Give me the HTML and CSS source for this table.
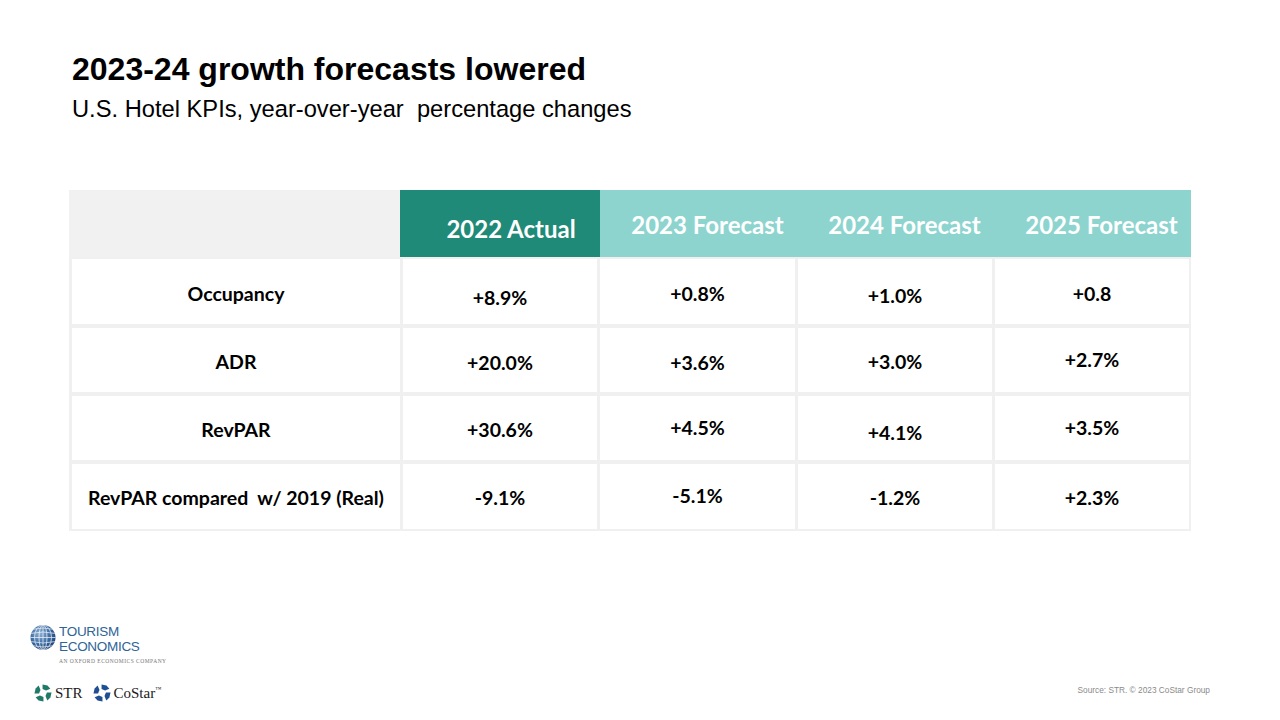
FILE: index.html
```html
<!DOCTYPE html>
<html>
<head>
<meta charset="utf-8">
<link rel="stylesheet" href="styles.css">
</head>
<body>
<div class="slide">
  <header class="heading">
    <h1 class="title">2023-24 growth forecasts lowered</h1>
    <p class="subtitle">U.S. Hotel KPIs, year-over-year&nbsp; percentage changes</p>
  </header>

  <section class="table">
    <div class="thead">
      <div class="th th-blank"></div>
      <div class="th th-actual"><span>2022 Actual</span></div>
      <div class="th-forecasts">
        <div class="th th-fc"><span>2023 Forecast</span></div>
        <div class="th th-fc"><span>2024 Forecast</span></div>
        <div class="th th-fc"><span>2025 Forecast</span></div>
      </div>
    </div>
    <div class="tbody">
      <div class="td lbl r1">Occupancy</div>
      <div class="td r1 dn2">+8.9%</div>
      <div class="td r1">+0.8%</div>
      <div class="td r1 dn1">+1.0%</div>
      <div class="td r1">+0.8</div>

      <div class="td lbl">ADR</div>
      <div class="td dn1">+20.0%</div>
      <div class="td dn1">+3.6%</div>
      <div class="td">+3.0%</div>
      <div class="td up1">+2.7%</div>

      <div class="td lbl">RevPAR</div>
      <div class="td">+30.6%</div>
      <div class="td up1">+4.5%</div>
      <div class="td dn2">+4.1%</div>
      <div class="td up1">+3.5%</div>

      <div class="td lbl">RevPAR compared&nbsp; w/ 2019 (Real)</div>
      <div class="td">-9.1%</div>
      <div class="td up1">-5.1%</div>
      <div class="td">-1.2%</div>
      <div class="td">+2.3%</div>
    </div>
  </section>

  <footer class="footer">
    <div class="logos">
      <div class="te-logo">
        <svg class="globe" width="26" height="27" viewBox="0 0 26 26">
          <defs>
            <radialGradient id="gg" cx="0.38" cy="0.35" r="0.7">
              <stop offset="0" stop-color="#8fb0d6"/>
              <stop offset="0.55" stop-color="#3f6fa6"/>
              <stop offset="1" stop-color="#1f4477"/>
            </radialGradient>
            <clipPath id="gc"><circle cx="13" cy="13" r="12.5"/></clipPath>
          </defs>
          <circle cx="13" cy="13" r="12.5" fill="url(#gg)"/>
          <g clip-path="url(#gc)" fill="none" stroke="#ffffff" stroke-width="0.8" opacity="0.85">
            <ellipse cx="13" cy="13" rx="4" ry="12.5"/>
            <ellipse cx="13" cy="13" rx="8.5" ry="12.5"/>
            <line x1="13" y1="0" x2="13" y2="26"/>
            <path d="M0 9 Q13 6 26 9"/>
            <path d="M0 13 H26"/>
            <path d="M0 17 Q13 20 26 17"/>
            <path d="M1 5 Q13 2 25 5"/>
            <path d="M1 21 Q13 24 25 21"/>
          </g>
        </svg>
        <div class="te-text">
          <div class="te-name">TOURISM</div>
          <div class="te-name">ECONOMICS</div>
          <div class="te-sub">AN OXFORD ECONOMICS COMPANY</div>
        </div>
      </div>
      <div class="partner-logos">
        <div class="brand">
          <svg class="pinwheel" width="18" height="18" viewBox="0 0 20 20">
            <g fill="#1f7a68">
              <path id="seg" d="M9.5 0.5 L15 1.8 L18.2 5.2 L13.4 7.2 L9.5 5.6 Z"/>
              <use href="#seg" transform="rotate(90 10 10)"/>
              <use href="#seg" transform="rotate(180 10 10)"/>
              <use href="#seg" transform="rotate(270 10 10)"/>
            </g>
          </svg>
          <span class="brand-name">STR</span>
        </div>
        <div class="brand">
          <svg class="pinwheel" width="18" height="18" viewBox="0 0 20 20">
            <g fill="#1f4f93">
              <path id="seg2" d="M9.5 0.5 L15 1.8 L18.2 5.2 L13.4 7.2 L9.5 5.6 Z"/>
              <use href="#seg2" transform="rotate(90 10 10)"/>
              <use href="#seg2" transform="rotate(180 10 10)"/>
              <use href="#seg2" transform="rotate(270 10 10)"/>
            </g>
          </svg>
          <span class="brand-name">CoStar<sup class="tm">™</sup></span>
        </div>
      </div>
    </div>
    <div class="source">Source: STR. © 2023 CoStar Group</div>
  </footer>
</div>
</body>
</html>
```

FILE: styles.css
```css
* { box-sizing: border-box; }
html, body { margin: 0; padding: 0; background: #ffffff; }
.slide {
  width: 1280px;
  height: 720px;
  display: flex;
  flex-direction: column;
  padding: 50px 0 0 0;
  font-family: "Liberation Sans", Arial, sans-serif;
  color: #000;
}
.heading { padding-left: 72px; }
.title {
  margin: 0;
  font-size: 32px;
  line-height: 38px;
  font-weight: 700;
  letter-spacing: 0;
}
.subtitle {
  margin: 7px 0 0 0;
  font-size: 23.7px;
  line-height: 28px;
  font-weight: 400;
}

.table {
  margin: 67px 0 0 69px;
  width: 1122px;
  font-family: Lato, "Open Sans", sans-serif;
  font-weight: 700;
}
.thead {
  display: flex;
  height: 67px;
}
.th { color: #fff; display: flex; align-items: center; justify-content: center; }
.th-blank { width: 331px; background: #f1f1f1; }
.th-actual {
  width: 200px;
  background: #1f8a77;
  font-size: 24px;
  padding: 10px 0 0 22px;
}
.th-forecasts {
  flex: 1;
  display: flex;
  background: #8dd4cf;
}
.th-fc {
  flex: 1;
  font-size: 24px;
  padding: 2px 0 0 18px;
}
.tbody {
  display: grid;
  grid-template-columns: 328px 194px 195px 194px 194px;
  grid-template-rows: 65px 64px 64px 65px;
  gap: 4px 3px;
  padding: 2px 2px 2px 3px;
  background: #f0f0f0;
}
.td {
  background: #fff;
  display: flex;
  align-items: center;
  justify-content: center;
  font-size: 19.5px;
  color: #000;
  padding-top: 2px;
}
.td.r1 { padding-top: 4px; }
.td.r1.dn2 { padding-top: 11px; }
.td.r1.dn1 { padding-top: 8px; }
.td.dn1 { padding-top: 4px; }
.td.dn2 { padding-top: 8px; }
.td.up1 { padding-top: 0; padding-bottom: 2px; }

.footer {
  margin-top: auto;
  display: flex;
  justify-content: space-between;
  align-items: flex-end;
  padding: 0 70px 18px 30px;
}
.logos { display: flex; flex-direction: column; gap: 19px; }
.te-logo { display: flex; align-items: flex-start; gap: 3px; }
.globe { margin-top: 0; }
.te-text { display: flex; flex-direction: column; padding-top: 0; }
.te-name {
  font-family: "Liberation Sans", Arial, sans-serif;
  font-size: 13.5px;
  line-height: 15px;
  color: #2e6496;
  letter-spacing: -0.3px;
  white-space: nowrap;
}
.te-sub {
  margin-top: 4px;
  font-family: "Liberation Serif", serif;
  font-size: 5.5px;
  line-height: 7px;
  color: #777;
  letter-spacing: 0.5px;
  white-space: nowrap;
}
.partner-logos { display: flex; align-items: center; gap: 10px; padding-left: 4px; }
.brand { display: flex; align-items: center; gap: 3px; }
.brand-name {
  font-family: "Liberation Serif", "Times New Roman", serif;
  font-size: 15px;
  color: #1a1a1a;
}
.tm { font-size: 6px; vertical-align: top; position: relative; top: 1px; }
.source {
  font-family: "Liberation Sans", Arial, sans-serif;
  font-size: 8.3px;
  color: #8a8a8a;
  padding-bottom: 7px;
}
```
